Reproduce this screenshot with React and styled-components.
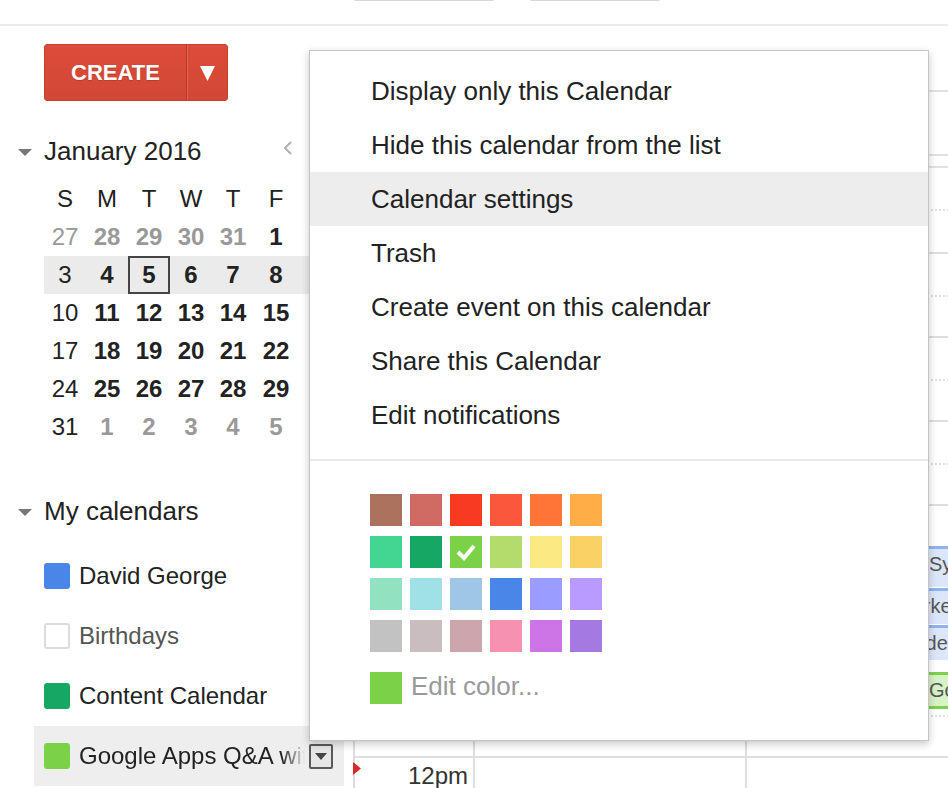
import React from 'react';
import styled, { createGlobalStyle } from 'styled-components';

const GlobalStyle = createGlobalStyle`
  html, body {
    margin: 0;
    padding: 0;
    background: #fff;
  }
  body {
    font-family: "Liberation Sans", Arial, sans-serif;
    color: #222;
    overflow: hidden;
  }
`;

const Page = styled.div`
  position: relative;
  width: 948px;
  height: 788px;
  overflow: hidden;
`;

const TopBar = styled.div`
  box-sizing: border-box;
  height: 26px;
  padding: 0 0 23px 353px;
  display: flex;
  align-items: flex-end;
  gap: 34px;
  border-bottom: 2px solid #ebebeb;
  overflow: hidden;
`;

const ToolButton = styled.div`
  flex-shrink: 0;
  box-sizing: border-box;
  width: ${(p) => p.$width}px;
  height: 30px;
  background: #f6f6f6;
  border: 1px solid #d6d6d6;
  border-radius: 3px;
  display: flex;
`;

const ToolSplit = styled.div`
  flex: 1;
  & + & {
    border-left: 1px solid #d6d6d6;
  }
`;

const Body = styled.div`
  display: flex;
  height: 762px;
`;

const Sidebar = styled.div`
  width: 344px;
  flex-shrink: 0;
  margin-right: 9px;
`;

const CreateRow = styled.div`
  margin: 18px 0 0 44px;
`;

const CreateButton = styled.div`
  box-sizing: border-box;
  width: 184px;
  height: 57px;
  display: flex;
  border: 1px solid #c4402f;
  border-radius: 3px;
  background: linear-gradient(#dd4b39, #d14836);
  color: #fff;
`;

const CreateLabel = styled.div`
  width: 141px;
  display: flex;
  align-items: center;
  justify-content: center;
  font-size: 22px;
  font-weight: bold;
  text-shadow: 0 1px 1px rgba(0, 0, 0, 0.15);
  border-right: 1px solid #b93a29;
`;

const CreateArrow = styled.div`
  flex: 1;
  display: flex;
  align-items: center;
  justify-content: center;
  border-left: 1px solid #e0644f;
`;

const SectionHeader = styled.div`
  height: 38px;
  display: flex;
  align-items: center;
  padding-left: 18px;
  margin-top: ${(p) => p.$top}px;
  font-size: 26px;
  color: #222;
`;

const Toggle = styled.svg`
  width: 14px;
  height: 8px;
  margin-right: 12px;
  margin-top: 4px;
`;

const HeaderTitle = styled.div`
  flex: 1;
`;

const NavArrows = styled.div`
  display: flex;
  gap: 18px;
  margin-right: 26px;
  margin-top: -6px;
`;

const MiniGrid = styled.div`
  margin: 10px 0 0 44px;
`;

const WeekRow = styled.div`
  display: grid;
  grid-template-columns: repeat(5, 42px) 44px 56px;
  height: 38px;
  background: ${(p) => (p.$current ? '#ebebeb' : 'transparent')};
`;

const DayCell = styled.div`
  box-sizing: border-box;
  display: flex;
  align-items: center;
  justify-content: center;
  font-size: 24px;
  font-weight: ${(p) => (p.$bold ? 'bold' : 'normal')};
  color: ${(p) => (p.$muted ? '#999' : '#222')};
  border: ${(p) => (p.$selected ? '2px solid #454545' : 'none')};
`;

const CalList = styled.div`
  margin: 16px 0 0 34px;
  width: 310px;
`;

const CalItem = styled.div`
  box-sizing: border-box;
  height: 60px;
  padding-left: 10px;
  display: flex;
  align-items: center;
  background: ${(p) => (p.$active ? '#eeeeee' : 'transparent')};
`;

const Swatch = styled.div`
  box-sizing: border-box;
  width: 26px;
  height: 26px;
  border-radius: 3px;
  flex-shrink: 0;
  background: ${(p) => p.$color};
  border: ${(p) => (p.$outline ? '2px solid #dcdcdc' : 'none')};
`;

const CalName = styled.div`
  margin-left: 9px;
  font-size: 24px;
  color: ${(p) => (p.$dim ? '#555' : '#222')};
  white-space: nowrap;
  overflow: hidden;
  width: ${(p) => (p.$clip ? '226px' : 'auto')};
  -webkit-mask-image: ${(p) => (p.$clip ? 'linear-gradient(90deg, #000 90%, transparent)' : 'none')};
  mask-image: ${(p) => (p.$clip ? 'linear-gradient(90deg, #000 90%, transparent)' : 'none')};
`;

const DropButton = styled.div`
  box-sizing: border-box;
  width: 24px;
  height: 25px;
  margin-left: 4px;
  border: 2px solid #5a5a5a;
  border-radius: 2px;
  background: #e6e6e6;
  display: flex;
  align-items: center;
  justify-content: center;
`;

const Main = styled.div`
  flex: 1;
  display: flex;
  flex-direction: column;
`;

const DayHeader = styled.div`
  height: 64px;
  flex-shrink: 0;
  border-bottom: 2px solid #e2e2e2;
`;

const AllDay = styled.div`
  height: 62px;
  flex-shrink: 0;
  border-bottom: 2px solid #e2e2e2;
`;

const Gap = styled.div`
  height: 10px;
  flex-shrink: 0;
  border-bottom: 2px solid #e2e2e2;
`;

const Hours = styled.div`
  position: relative;
  border-left: 2px solid #dddddd;
`;

const HourRow = styled.div`
  box-sizing: border-box;
  display: grid;
  grid-template-columns: 118px 272px 272px;
  height: 84px;
  border-top: ${(p) => (p.$first ? 'none' : '2px solid #dedede')};
`;

const TimeLabel = styled.div`
  text-align: right;
  padding: 4px 5px 0 0;
  font-size: 24px;
  color: #333;
`;

const DaySlot = styled.div`
  position: relative;
  border-left: 2px solid #dedede;
  &::after {
    content: '';
    position: absolute;
    left: 0;
    right: 0;
    top: 41px;
    border-top: 2px dotted #dedede;
  }
`;

const EventChip = styled.div`
  position: absolute;
  box-sizing: border-box;
  left: ${(p) => 390 + p.$left}px;
  width: 260px;
  padding-left: 3px;
  font-size: 20px;
  line-height: 30px;
  color: #555;
  white-space: nowrap;
  overflow: hidden;
  background: ${(p) => (p.$green ? '#d7f2c6' : '#dce6fb')};
  border-top: 3px solid ${(p) => (p.$green ? '#7bd148' : '#8eb3ef')};
  border-bottom: ${(p) => (p.$green ? '3px solid #7bd148' : 'none')};
`;

const NowMarker = styled.svg`
  position: absolute;
  left: -2px;
  top: 594px;
  width: 8px;
  height: 13px;
`;

const Menu = styled.div`
  position: absolute;
  left: 309px;
  top: 50px;
  width: 620px;
  box-sizing: border-box;
  padding: 13px 0 36px;
  background: #fff;
  border: 1px solid #c4c4c4;
  box-shadow: 0 3px 8px rgba(0, 0, 0, 0.22);
`;

const MenuItem = styled.div`
  height: 54px;
  display: flex;
  align-items: center;
  padding-left: 61px;
  font-size: 26px;
  color: #222;
  background: ${(p) => (p.$hover ? '#ededed' : 'transparent')};
`;

const MenuDivider = styled.div`
  margin-top: 17px;
  border-top: 2px solid #e8e8e8;
`;

const Palette = styled.div`
  margin: 33px 0 0 60px;
  display: grid;
  grid-template-columns: repeat(6, 32px);
  column-gap: 8px;
  row-gap: 10px;
`;

const ColorBox = styled.div`
  width: 32px;
  height: 32px;
  background: ${(p) => p.$color};
  display: flex;
  align-items: center;
  justify-content: center;
`;

const EditRow = styled.div`
  margin: 20px 0 0 60px;
  display: flex;
  align-items: center;
  gap: 9px;
`;

const EditText = styled.div`
  font-size: 26px;
  color: #999;
  margin-top: -3px;
`;

const menuItems = [
  'Display only this Calendar',
  'Hide this calendar from the list',
  'Calendar settings',
  'Trash',
  'Create event on this calendar',
  'Share this Calendar',
  'Edit notifications',
];

const palette = [
  '#ac725e', '#d06b64', '#f83a22', '#fa573c', '#ff7537', '#ffad46',
  '#42d692', '#16a765', '#7bd148', '#b3dc6c', '#fbe983', '#fad165',
  '#92e1c0', '#9fe1e7', '#9fc6e7', '#4986e7', '#9a9cff', '#b99aff',
  '#c2c2c2', '#cabdbf', '#cca6ac', '#f691b2', '#cd74e6', '#a47ae2',
];

const weeks = [
  [27, 28, 29, 30, 31, 1, 2],
  [3, 4, 5, 6, 7, 8, 9],
  [10, 11, 12, 13, 14, 15, 16],
  [17, 18, 19, 20, 21, 22, 23],
  [24, 25, 26, 27, 28, 29, 30],
  [31, 1, 2, 3, 4, 5, 6],
];

const calendars = [
  { name: 'David George', color: '#4986e7' },
  { name: 'Birthdays', color: '#fff', outline: true, dim: true },
  { name: 'Content Calendar', color: '#16a765' },
  { name: 'Google Apps Q&A with David', color: '#7bd148', active: true },
];

const hours = ['5am', '6am', '7am', '8am', '9am', '10am', '11am', '12pm'];

const events = [
  { title: 'Sync up', top: 378, height: 41, left: 181 },
  { title: 'Marketing review', top: 420, height: 36, left: 148 },
  { title: 'Code review', top: 457, height: 35, left: 152 },
  { title: 'Google Apps Q&A', top: 504, height: 37, left: 181, green: true },
];

const isMuted = (w, d) => (w === 0 && d < 5) || (w === 5 && d > 0);

const ToggleIcon = () => (
  <Toggle viewBox="0 0 14 8">
    <polygon points="0,0 14,0 7,7" fill="#777" />
  </Toggle>
);

export default function App() {
  return (
    <Page>
      <GlobalStyle />
      <TopBar>
        <ToolButton $width={142} />
        <ToolButton $width={132}>
          <ToolSplit />
          <ToolSplit />
        </ToolButton>
      </TopBar>
      <Body>
        <Sidebar>
          <CreateRow>
            <CreateButton>
              <CreateLabel>CREATE</CreateLabel>
              <CreateArrow>
                <svg width="15" height="16" viewBox="0 0 15 16">
                  <polygon points="0,1 15,1 7.5,16" fill="#fff" />
                </svg>
              </CreateArrow>
            </CreateButton>
          </CreateRow>

          <SectionHeader $top={31}>
            <ToggleIcon />
            <HeaderTitle>January 2016</HeaderTitle>
            <NavArrows>
              <svg width="8" height="14" viewBox="0 0 8 14">
                <polyline points="7,1 1,7 7,13" fill="none" stroke="#b0b0b0" strokeWidth="2" />
              </svg>
              <svg width="8" height="14" viewBox="0 0 8 14">
                <polyline points="1,1 7,7 1,13" fill="none" stroke="#b0b0b0" strokeWidth="2" />
              </svg>
            </NavArrows>
          </SectionHeader>
          <MiniGrid>
            <WeekRow>
              {['S', 'M', 'T', 'W', 'T', 'F', 'S'].map((l, i) => (
                <DayCell key={i}>{l}</DayCell>
              ))}
            </WeekRow>
            {weeks.map((week, w) => (
              <WeekRow key={w} $current={w === 1}>
                {week.map((day, d) => (
                  <DayCell
                    key={d}
                    $bold={d !== 0}
                    $muted={isMuted(w, d)}
                    $selected={w === 1 && d === 2}
                  >
                    {day}
                  </DayCell>
                ))}
              </WeekRow>
            ))}
          </MiniGrid>

          <SectionHeader $top={46}>
            <ToggleIcon />
            <HeaderTitle>My calendars</HeaderTitle>
          </SectionHeader>
          <CalList>
            {calendars.map((c) => (
              <CalItem key={c.name} $active={c.active}>
                <Swatch $color={c.color} $outline={c.outline} />
                <CalName $dim={c.dim} $clip={c.active}>{c.name}</CalName>
                {c.active && (
                  <DropButton>
                    <svg width="12" height="7" viewBox="0 0 12 7">
                      <polygon points="0,0 12,0 6,7" fill="#444" />
                    </svg>
                  </DropButton>
                )}
              </CalItem>
            ))}
          </CalList>
        </Sidebar>

        <Main>
          <DayHeader />
          <AllDay />
          <Gap />
          <Hours>
            {hours.map((h, i) => (
              <HourRow key={h} $first={i === 0}>
                <TimeLabel>{h}</TimeLabel>
                <DaySlot />
                <DaySlot />
              </HourRow>
            ))}
            {events.map((ev) => (
              <EventChip
                key={ev.title}
                $left={ev.left}
                $green={ev.green}
                style={{ top: ev.top, height: ev.height }}
              >
                {ev.title}
              </EventChip>
            ))}
            <NowMarker viewBox="0 0 8 13">
              <polygon points="0,0 8,6.5 0,13" fill="#d92a2a" />
            </NowMarker>
          </Hours>
        </Main>
      </Body>

      <Menu>
        {menuItems.map((item) => (
          <MenuItem key={item} $hover={item === 'Calendar settings'}>
            {item}
          </MenuItem>
        ))}
        <MenuDivider />
        <Palette>
          {palette.map((c) => (
            <ColorBox key={c} $color={c}>
              {c === '#7bd148' && (
                <svg width="22" height="18" viewBox="0 0 22 18">
                  <polyline points="3,9 9,15 19,3" fill="none" stroke="#fff" strokeWidth="4" />
                </svg>
              )}
            </ColorBox>
          ))}
        </Palette>
        <EditRow>
          <ColorBox $color="#7bd148" />
          <EditText>Edit color...</EditText>
        </EditRow>
      </Menu>
    </Page>
  );
}
